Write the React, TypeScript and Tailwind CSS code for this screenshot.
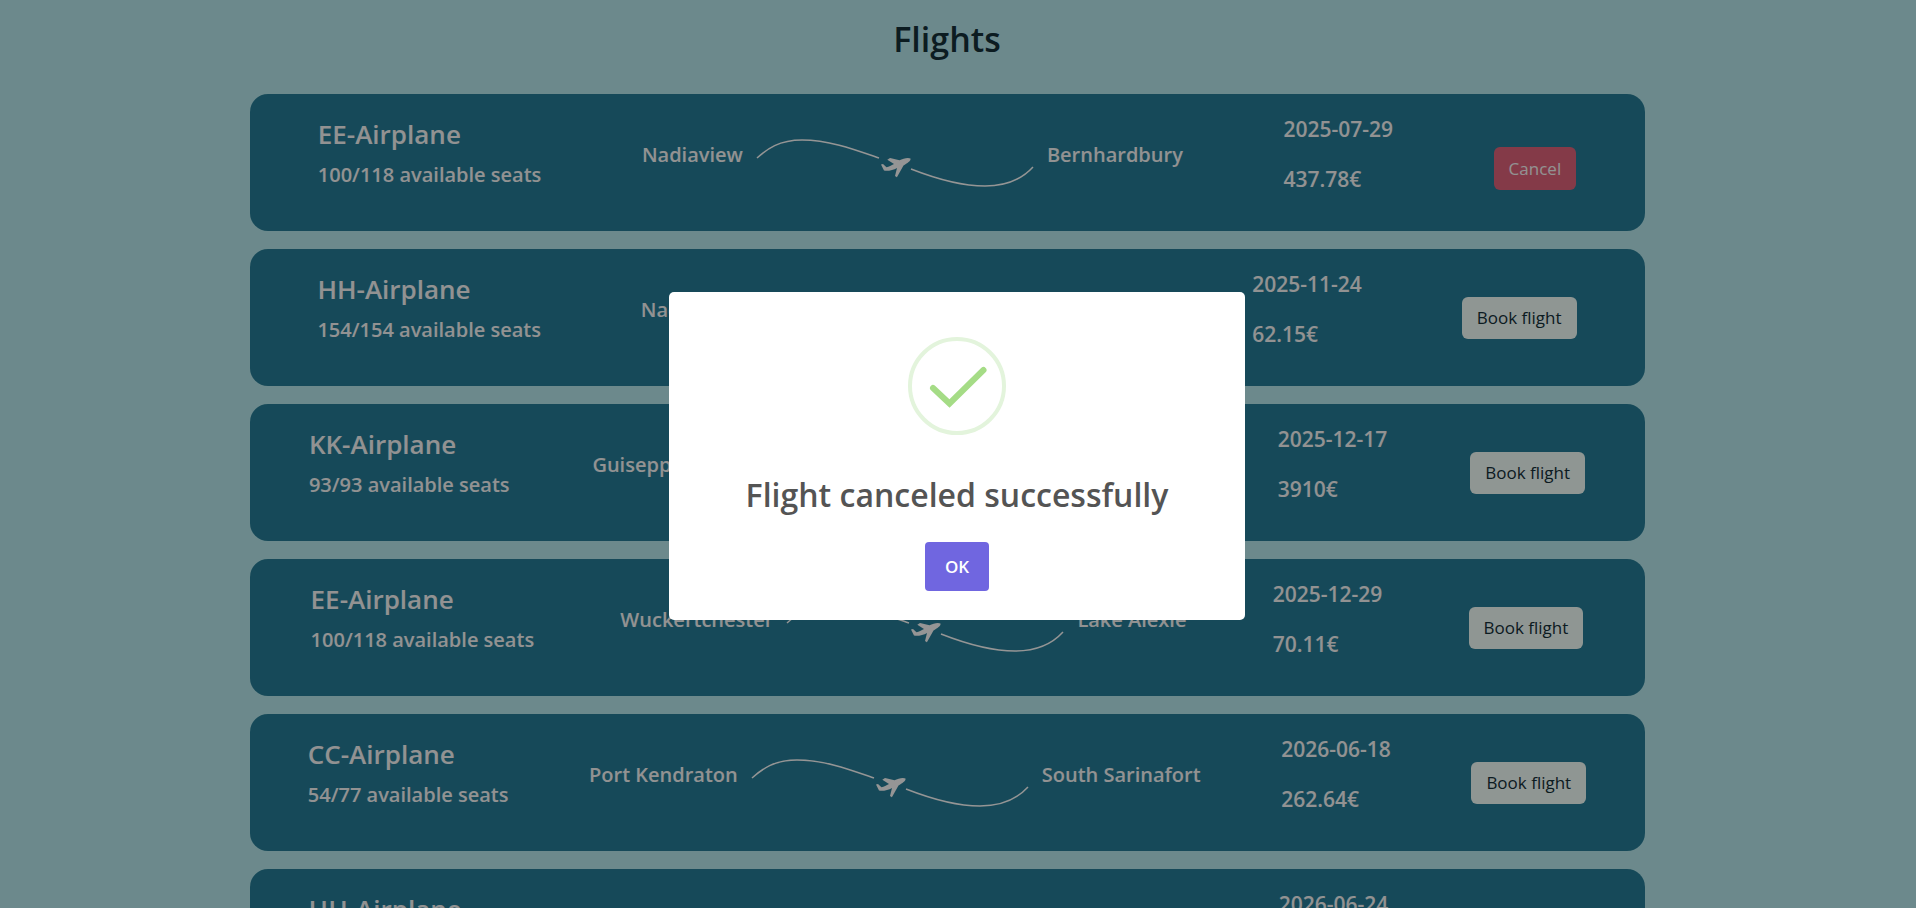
type Flight = {
  id: number;
  plane: string;
  seats: string;
  from: string;
  to: string;
  date: string;
  price: string;
  booked?: boolean;
};

const flights: Flight[] = [
  { id: 1, plane: "EE-Airplane", seats: "100/118", from: "Nadiaview", to: "Bernhardbury", date: "2025-07-29", price: "437.78€", booked: true },
  { id: 2, plane: "HH-Airplane", seats: "154/154", from: "Nadiaview", to: "East Mayra", date: "2025-11-24", price: "62.15€" },
  { id: 3, plane: "KK-Airplane", seats: "93/93", from: "Guiseppeville", to: "South Emmaleigh", date: "2025-12-17", price: "3910€" },
  { id: 4, plane: "EE-Airplane", seats: "100/118", from: "Wuckertchester", to: "Lake Alexie", date: "2025-12-29", price: "70.11€" },
  { id: 5, plane: "CC-Airplane", seats: "54/77", from: "Port Kendraton", to: "South Sarinafort", date: "2026-06-18", price: "262.64€" },
  { id: 6, plane: "HH-Airplane", seats: "154/154", from: "Port Kendraton", to: "Guiseppeville", date: "2026-06-24", price: "120.5€" },
];

function Route() {
  return (
    <svg className="h-14 w-[304px] shrink-0" viewBox="0 0 304 56" fill="none" aria-hidden="true">
      <path d="M14 26C24 17 36 8 59 8C87 8 113 18 136 26" stroke="#f8f8f8" strokeWidth="1.5" />
      <path d="M168 37C191 46 217 54 242 54C266 54 280 46 290 35" stroke="#f8f8f8" strokeWidth="1.5" />
      <path
        d="M167.500 26.500C165.500 25.200 160 26.200 156.500 28.300L147 26L144.300 27.800L151 32C148.300 33.600 146 34.700 143.500 35.200L140 32L138 32.600L141 38.600C145 39.400 150.500 37.900 154 35.900L152 44L153.900 45.200L160.500 33.500C164 31.500 168.300 28.700 167.500 26.500Z"
        fill="#f8f8f8"
      />
    </svg>
  );
}

function FlightRow({ flight }: { flight: Flight }) {
  return (
    <li className="flex h-[137px] items-start justify-around rounded-[18px] bg-[#267b94] px-[18px] text-[#f4f4f4]">
      <div className="pt-[22px] font-semibold">
        <h2 className="text-[26px] leading-9">{flight.plane}</h2>
        <p className="mt-[5px] text-[20px] leading-9">{flight.seats} available seats</p>
      </div>
      <div className="flex pt-[38px] text-[20px] leading-[46px] font-semibold">
        <span>{flight.from}</span>
        <Route />
        <span>{flight.to}</span>
      </div>
      <div className="pt-[19px] text-[21px] leading-8 font-semibold">
        <p>{flight.date}</p>
        <p className="mt-[18px]">{flight.price}</p>
      </div>
      {flight.booked ? (
        <button type="button" className="mt-[53px] h-[43px] rounded-md bg-[#dd6279] px-[15px] text-[17px]">
          Cancel
        </button>
      ) : (
        <button type="button" className="mt-12 h-[42px] rounded-md bg-[#eefaf6] px-[15px] text-[17px] text-[#142f38]">
          Book flight
        </button>
      )}
    </li>
  );
}

function SuccessDialog() {
  return (
    <div className="fixed inset-0 flex items-center justify-center bg-black/40 pt-1 pr-0.5">
      <div
        role="dialog"
        aria-modal="true"
        aria-labelledby="dialog-title"
        className="flex w-[576px] max-w-full flex-col items-center rounded-[5px] bg-white pt-[45px] pb-[29px]"
      >
        <svg className="size-[98px]" viewBox="0 0 98 98" fill="none" aria-hidden="true">
          <circle cx="49" cy="49" r="47" stroke="#e3f4dc" strokeWidth="4" />
          <path d="M25 51L41.500 66.500L75.500 33" stroke="#a5dc86" strokeWidth="6" strokeLinecap="round" />
        </svg>
        <h2 id="dialog-title" className="mt-[35px] text-[32px] leading-[50px] font-semibold text-[#545454]">
          Flight canceled successfully
        </h2>
        <button type="button" className="mt-[22px] h-[49px] rounded bg-[#7066e0] px-5 text-[17px] font-semibold text-white">
          OK
        </button>
      </div>
    </div>
  );
}

export default function App() {
  return (
    <div className="h-screen overflow-hidden bg-[#b4e5ea] pr-[22px] font-['Open_Sans',sans-serif]">
      <h1 className="pt-4 text-center text-[34px] leading-[46px] font-semibold text-[#142f38]">Flights</h1>
      <ul className="mx-auto mt-8 flex w-[1395px] max-w-full flex-col gap-[18px]">
        {flights.map((flight) => (
          <FlightRow key={flight.id} flight={flight} />
        ))}
      </ul>
      <SuccessDialog />
    </div>
  );
}
